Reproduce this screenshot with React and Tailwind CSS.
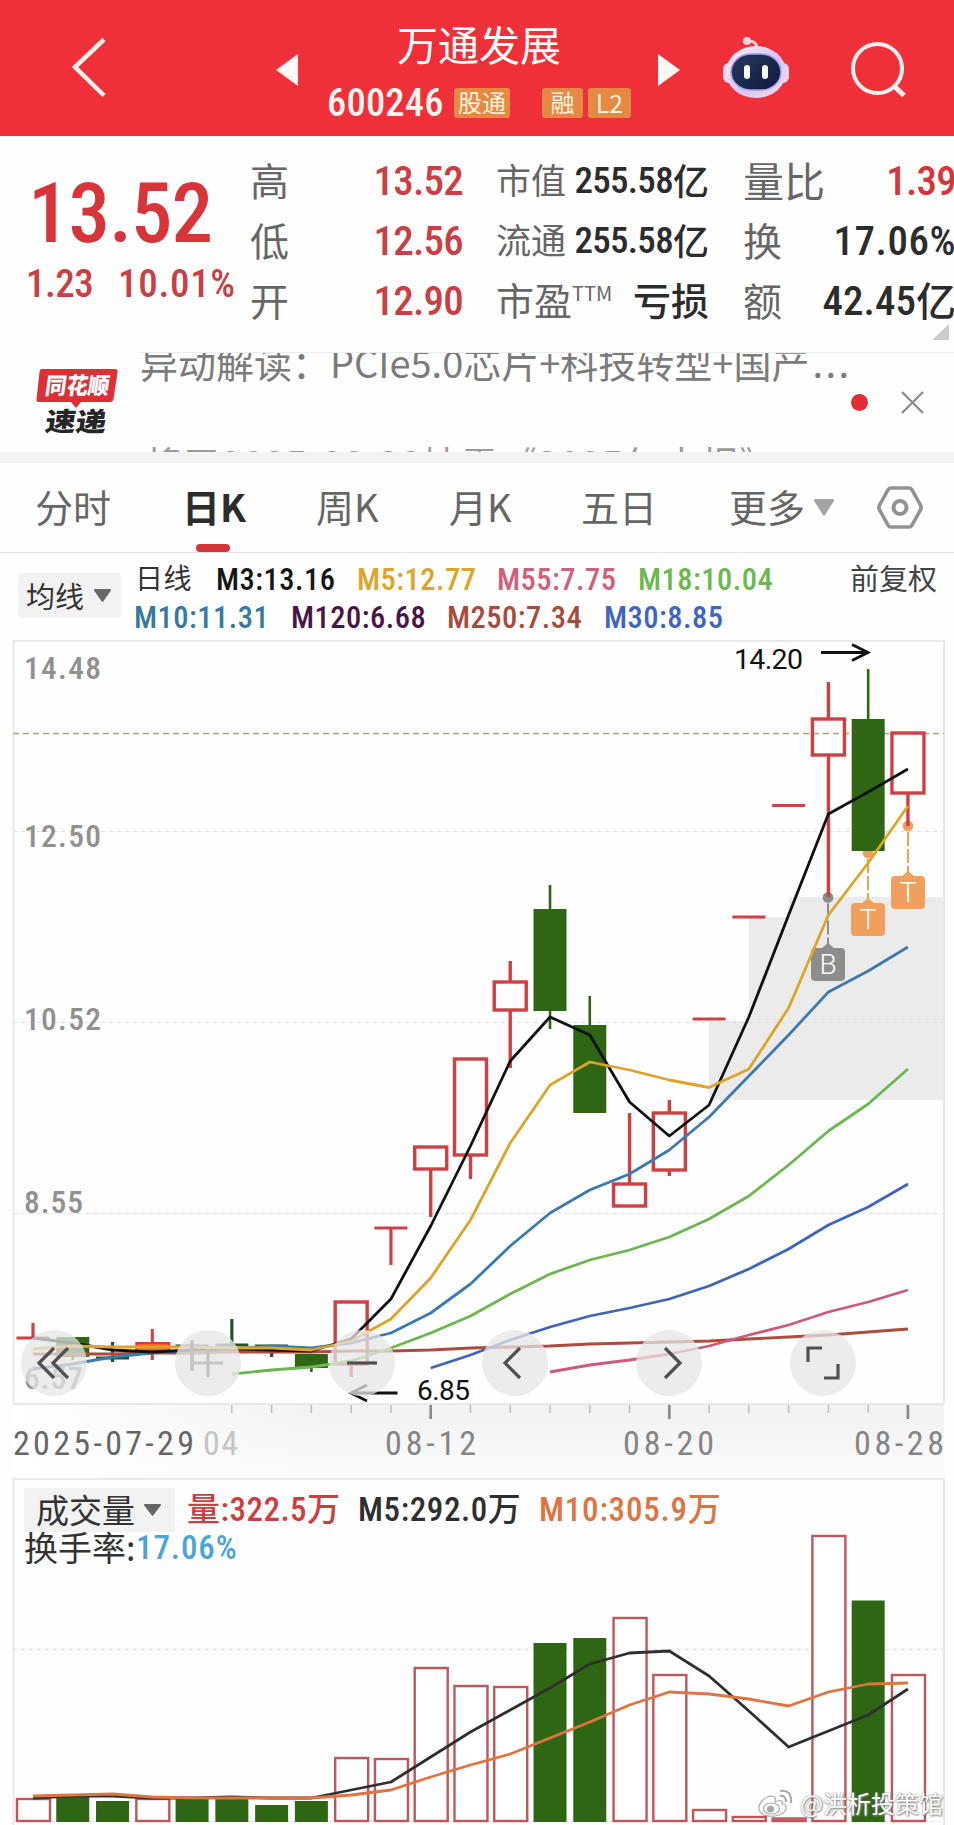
import React from 'react';

const num = "font-['Roboto','Noto_Sans_CJK_SC',sans-serif] [font-stretch:75%] font-medium whitespace-nowrap";
const svgFont = "font-['Roboto','Noto_Sans_CJK_SC',sans-serif]";
const svgNarrow = "font-['Roboto','Noto_Sans_CJK_SC',sans-serif] [font-stretch:75%]";

const RED = '#cf3f43';
const GREEN = '#2f6614';

// x centre of the n-th trading day
const dayX = (i) => 33 + i * 39.77;

// type, body top, body bottom, wick top, wick bottom
const candles = [
  ['dash', 1338, 1338, 1323, 1338],
  ['down', 1337, 1357, 1337, 1360],
  ['downDash', 1358, 1358, 1342, 1362],
  ['hot', 1342, 1351, 1329, 1360],
  ['downDash', 1346, 1346, 1340, 1369],
  ['downDash', 1345, 1345, 1319, 1348],
  ['downDash', 1346, 1346, 1345, 1357],
  ['down', 1354, 1368, 1354, 1372],
  ['up', 1302, 1364, 1302, 1377],
  ['dash', 1228, 1228, 1228, 1265],
  ['up', 1147, 1169, 1147, 1217],
  ['up', 1059, 1155, 1059, 1179],
  ['up', 982, 1010, 961, 1068],
  ['down', 909, 1011, 885, 1029],
  ['down', 1025, 1113, 996, 1113],
  ['up', 1184, 1206, 1113, 1206],
  ['up', 1113, 1170, 1100, 1176],
  ['dash', 1019, 1019, 1019, 1019],
  ['dash', 917, 917, 917, 917],
  ['dash', 805.5, 805.5, 805.5, 805.5],
  ['up', 719, 755, 682, 897],
  ['down', 719, 851, 669, 851],
  ['up', 733, 793, 733, 826],
];

const priceLines = [
  { color: '#b04a3c', from: 0, ys: [1354, 1354, 1354, 1353, 1353, 1352, 1352, 1352, 1351, 1351, 1350, 1348, 1347, 1346, 1344, 1343, 1342, 1341, 1339, 1337, 1335, 1332, 1329] },
  { color: '#cb5b76', from: 13, ys: [1372, 1365, 1360, 1354, 1346, 1335, 1325, 1312, 1302, 1290] },
  { color: '#3d66bb', from: 10, ys: [1368, 1355, 1340, 1327, 1316, 1308, 1299, 1286, 1269, 1249, 1225, 1207, 1184] },
  { color: '#6bb74e', from: 5, ys: [1374, 1370, 1367, 1361, 1348, 1333, 1316, 1294, 1274, 1260, 1250, 1237, 1219, 1196, 1165, 1131, 1104, 1069] },
  { color: '#3a7aae', from: 0, ys: [1369, 1364, 1357, 1353, 1350, 1349, 1346, 1348, 1343, 1333, 1313, 1284, 1246, 1213, 1190, 1174, 1150, 1117, 1076, 1035, 992, 971, 947] },
  { color: '#111111', from: 0, ys: [1338, 1343, 1350, 1352, 1350, 1349, 1350, 1351, 1339, 1299, 1226, 1146, 1061, 1017, 1035, 1102, 1136, 1105, 1017, 915, 814, 792, 769] },
  { color: '#dca528', from: 0, ys: [1349, 1346, 1347, 1347, 1347, 1348, 1348, 1350, 1341, 1319, 1278, 1220, 1143, 1085, 1062, 1070, 1080, 1087.5, 1069, 1008, 915, 863, 806] },
];

const volumes = [
  ['up', 1799], ['down', 1797], ['down', 1801], ['up', 1799], ['down', 1798], ['down', 1798],
  ['down', 1805], ['down', 1801], ['up', 1758], ['up', 1759], ['up', 1668], ['up', 1686],
  ['up', 1687], ['down', 1643], ['down', 1638], ['up', 1618], ['up', 1675], ['up', 1810],
  ['up', 1817], ['up', 1818.5], ['up', 1536], ['down', 1600.5], ['up', 1675],
];

const volumeLines = [
  { color: '#2f2f2f', ys: [1798, 1796, 1796, 1798, 1798, 1797, 1798, 1798, 1790, 1782, 1757, 1732, 1710, 1688, 1664, 1653, 1651, 1676, 1711, 1747, 1731, 1715, 1689] },
  { color: '#e0743f', ys: [1796, 1795, 1794, 1797, 1798, 1798, 1798, 1798, 1795, 1790, 1777, 1765, 1754, 1738, 1722, 1705, 1692, 1694, 1699, 1706, 1692, 1684, 1683] },
];

const toPoints = (ys, from = 0) => ys.map((y, k) => `${dayX(from + k)},${y}`).join(' ');

function Candle({ index, data }) {
  const [type, top, bottom, high, low] = data;
  const x = dayX(index);
  if (type === 'up') {
    return (
      <g stroke={RED} strokeWidth="3.4" fill="none">
        <path d={`M${x} ${high}V${top}M${x} ${bottom}V${low}`} />
        <rect x={x - 16} y={top} width="32" height={bottom - top} />
      </g>
    );
  }
  if (type === 'down') {
    return (
      <g>
        <path d={`M${x} ${high}V${low}`} stroke={GREEN} strokeWidth="2.6" />
        <rect x={x - 16.5} y={top} width="33" height={bottom - top} fill={GREEN} />
      </g>
    );
  }
  if (type === 'hot') {
    return (
      <g>
        <path d={`M${x} ${high}V${low}`} stroke={RED} strokeWidth="3" />
        <rect x={x - 16} y={top + 1} width="33" height={bottom - top - 1} fill="#fb6425" stroke={RED} strokeWidth="2" />
      </g>
    );
  }
  const color = type === 'dash' ? RED : '#24502a';
  return <path d={`M${x - 16.5} ${top}H${x + 16.5}M${x} ${high}V${low}`} stroke={color} strokeWidth="3.2" />;
}

function Marker({ x, dotY, boxY, letter, color }) {
  return (
    <g>
      <circle cx={x} cy={dotY} r="5.4" fill={color} />
      <path d={`M${x} ${dotY + 6}V${boxY - 4}`} stroke={color} strokeWidth="2" strokeDasharray="14 3" />
      <path d={`M${x} ${boxY - 5}l6 5h7q4 0 4 4v25q0 4 -4 4h-26q-4 0 -4 -4v-25q0 -4 4 -4h7z`} fill={color} />
      <text x={x} y={boxY + 26} textAnchor="middle" fontSize="28" fontWeight="300" fill="#fff" className={svgFont}>{letter}</text>
    </g>
  );
}

function Caret({ className, width, height }) {
  return (
    <svg width={width} height={height} viewBox="0 0 20 16" preserveAspectRatio="none" className={className}>
      <path d="M1 0h18q1.500 .5 .7 2L11 15q-1 1.300 -2 0L.3 2Q-.5 .5 1 0z" fill="currentColor" />
    </svg>
  );
}

function Header() {
  return (
    <header className="flex h-[136px] bg-[#f03038] text-white">
      <div className="w-[275px] pt-[36px] pl-[71px]">
        <svg width="36" height="62" viewBox="0 0 36 62" fill="none" stroke="#fff0ec" strokeWidth="4.500">
          <path d="M33 3.500L4 31l29 28.500" />
        </svg>
      </div>
      <div className="w-[24px] pt-[53px]">
        <svg width="24" height="34" viewBox="0 0 24 34" fill="#fff8f4"><path d="M1 17L23 1v32z" /></svg>
      </div>
      <div className="w-[358px]">
        <div className="mt-[15px] h-[66px] pl-[2px] text-center text-[41px] leading-[56px]">万通发展</div>
        <div className="flex h-[44px] items-center pl-[28px]">
          <span className={`${num} w-[127px] text-[38.500px] leading-[40px] tracking-[0.2px] text-[#fff4ee]`}>600246</span>
          <span className="h-[30px] w-[56px] rounded-[3px] bg-[#e58945] text-center text-[24px] leading-[28px] text-[#fff3dc]">股通</span>
          <span className="ml-[32px] h-[30px] w-[41px] rounded-[3px] bg-[#e58945] text-center text-[24px] leading-[28px] text-[#fff3dc]">融</span>
          <span className="ml-[5px] h-[30px] w-[43px] rounded-[3px] bg-[#e58945] text-center text-[25px] leading-[28px] text-[#fff3dc]">L2</span>
        </div>
      </div>
      <div className="w-[64px] pt-[53px]">
        <svg width="24" height="34" viewBox="0 0 24 34" fill="#fff8f4"><path d="M23 17L1 1v32z" /></svg>
      </div>
      <div className="w-[128px] pt-[36px] pl-[1px]">
        <svg width="68" height="64" viewBox="0 0 68 64">
          <defs>
            <linearGradient id="shell" x1="0" y1="0" x2="1" y2="1">
              <stop offset="0" stopColor="#fff1f3" />
              <stop offset=".55" stopColor="#d6c6f6" />
              <stop offset="1" stopColor="#f6dcf1" />
            </linearGradient>
            <linearGradient id="visor" x1="0" y1="0" x2="1" y2="1">
              <stop offset="0" stopColor="#263a60" />
              <stop offset="1" stopColor="#10183c" />
            </linearGradient>
          </defs>
          <path d="M25 5q10-1 10 8" stroke="#f9c9cf" strokeWidth="3" fill="none" />
          <circle cx="25" cy="5" r="4" fill="#fbd5d8" />
          <rect x="1" y="27" width="12" height="20" rx="6" fill="#f3d6ea" />
          <rect x="55" y="27" width="12" height="20" rx="6" fill="#f3cfe2" />
          <ellipse cx="34" cy="36" rx="30" ry="26" fill="url(#shell)" />
          <rect x="9" y="18" width="50" height="36" rx="20" fill="url(#visor)" stroke="#a79df0" strokeWidth="1.500" />
          <rect x="22" y="29" width="6" height="14" rx="3" fill="#fff" />
          <rect x="40" y="29" width="6" height="14" rx="3" fill="#fff" />
        </svg>
      </div>
      <div className="pt-[40px]">
        <svg width="60" height="60" viewBox="0 0 60 60" fill="none" stroke="#fff0ec" strokeWidth="4">
          <circle cx="28.500" cy="28.500" r="24.500" />
          <path d="M44 45l11 10.500" strokeWidth="5" />
        </svg>
      </div>
    </header>
  );
}

function Quote() {
  return (
    <section className="relative flex h-[216px] overflow-hidden text-[#666]">
      <div className="w-[250px] shrink-0 pt-[34px] text-[#d8353a]">
        <div className={`${num} h-[88px] pl-[28px] text-[83px] leading-[88px] tracking-[-1px]`}>13.52</div>
        <div className="flex pl-[26px] pt-[2px] text-[#c93f43]">
          <span className={`${num} w-[92px] text-[39px] leading-[48px] tracking-[-0.5px]`}>1.23</span>
          <span className={`${num} text-[39px] leading-[48px] tracking-[0.7px]`}>10.01%</span>
        </div>
      </div>
      <div className="grid w-[213px] shrink-0 grid-rows-3 pt-[15px] pb-[21px]">
        {[['高', '13.52'], ['低', '12.56'], ['开', '12.90']].map(([label, value]) => (
          <div key={label} className="flex items-center justify-between">
            <span className="pb-[4px] text-[39px] leading-[56px]">{label}</span>
            <span className={`${num} text-[41px] leading-[60px] tracking-[-0.8px] text-[#c93f43]`}>{value}</span>
          </div>
        ))}
      </div>
      <div className="ml-[33px] grid w-[213px] shrink-0 grid-rows-3 pt-[15px] pb-[21px]">
        {[['市值', '255.58'], ['流通', '255.58']].map(([label, value]) => (
          <div key={label} className="flex items-center justify-between whitespace-nowrap">
            <span className="pb-[4px] text-[35px] leading-[56px]">{label}</span>
            <span className="flex items-center text-[#2c2c2c]">
              <span className={`${num} text-[37px] leading-[60px] tracking-[-0.7px]`}>{value}</span>
              <span className="pb-[4px] text-[36px] leading-[56px] font-medium">亿</span>
            </span>
          </div>
        ))}
        <div className="flex items-center justify-between whitespace-nowrap">
          <span className="flex pb-[4px] text-[38px] leading-[56px]">市盈<span className="text-[20px] leading-[44px]">TTM</span></span>
          <span className="pb-[4px] text-[38px] leading-[56px] font-medium text-[#2c2c2c]">亏损</span>
        </div>
      </div>
      <div className="ml-[34px] grid w-[213px] shrink-0 grid-rows-3 pt-[15px] pb-[21px]">
        <div className="flex items-center justify-between">
          <span className="pb-[4px] text-[41px] leading-[56px]">量比</span>
          <span className={`${num} text-[41px] leading-[60px] tracking-[-0.8px] text-[#d8353a]`}>1.39</span>
        </div>
        <div className="flex items-center justify-between">
          <span className="pb-[4px] text-[39px] leading-[56px]">换</span>
          <span className={`${num} text-[41px] leading-[60px] tracking-[0.5px] text-[#2c2c2c]`}>17.06%</span>
        </div>
        <div className="flex items-center justify-between">
          <span className="pb-[4px] text-[39px] leading-[56px]">额</span>
          <span className="flex items-center text-[#2c2c2c]">
            <span className={`${num} text-[41px] leading-[60px]`}>42.45</span>
            <span className="pb-[4px] text-[40px] leading-[56px] font-medium">亿</span>
          </span>
        </div>
      </div>
      <svg className="absolute right-[5px] bottom-[12px]" width="17" height="16" viewBox="0 0 17 16"><path d="M17 0v16H0z" fill="#ccc" /></svg>
    </section>
  );
}

function News() {
  return (
    <section className="flex h-[100px] overflow-hidden">
      <div className="w-[140px] shrink-0 pt-[16px] pl-[35px]">
        <svg width="84" height="72" viewBox="0 0 84 72">
          <path d="M7 1h73q3 0 2.500 3l-4 27q-.5 3-3.500 3H46l-5 6-5-6H4q-3 0-2.500-3l3-27q.3-3 2.500-3z" fill="#dc3036" />
          <g transform="skewX(-8)" className="font-['Noto_Sans_CJK_SC',sans-serif]" fontWeight="900">
            <text x="13" y="26" fontSize="23" fill="#fff" textLength="64" lengthAdjust="spacingAndGlyphs">同花顺</text>
            <text x="18" y="63" fontSize="26" fill="#262626" textLength="61" lengthAdjust="spacingAndGlyphs">速递</text>
          </g>
        </svg>
      </div>
      <div className="w-[710px] shrink-0 overflow-hidden border-t border-[#ececec] whitespace-nowrap text-[#7b7b7b]">
        <div className="-mt-[19px] h-[56px] text-[38px] leading-[56px]">异动解读：PCIe5.0芯片+科技转型+国产<span className="ml-[3px] tracking-[2.500px]">...</span></div>
        <div className="mt-[48px] h-[50px] pl-[4px] text-[38px] leading-[50px] tracking-[0.55px] text-[#9a9a9a]">将于2025-08-28披露《2025年中报》</div>
      </div>
      <div className="flex h-[100px] grow items-center border-t border-[#ececec] pl-[1px]">
        <span className="h-[17px] w-[17px] rounded-full bg-[#e22d30]" />
        <svg className="ml-[33px]" width="23" height="23" viewBox="0 0 23 23" stroke="#8a8a8a" strokeWidth="2.200"><path d="M1 1l21 21M22 1L1 22" /></svg>
      </div>
    </section>
  );
}

function Tabs() {
  return (
    <nav className="flex h-[90px] border-b border-[#e6e6ea] text-[38px] leading-[85px] text-[#666] whitespace-nowrap">
      <span className="w-[182px] pl-[35px]">分时</span>
      <span className="relative w-[134px] font-bold text-[#2c2c2c]">
        日K
        <span className="absolute bottom-0 left-[14px] h-[8px] w-[34px] rounded-full bg-[#d3363b]" />
      </span>
      <span className="w-[133px]">周K</span>
      <span className="w-[132px]">月K</span>
      <span className="w-[148px]">五日</span>
      <span className="flex w-[148px]">
        更多
        <Caret className="mt-[36px] ml-[9px] text-[#a3a3a3]" width="20" height="17" />
      </span>
      <svg className="mt-[22px]" width="46" height="45" viewBox="0 0 46 45" fill="none" stroke="#929292" strokeWidth="3.600">
        <path d="M14 3h18q2 0 3 2l8.500 15q1.200 2.500 0 5L35 40q-1 2-3 2H14q-2 0-3-2L2.500 25q-1.200-2.500 0-5L11 5q1-2 3-2z" />
        <circle cx="23" cy="22.500" r="6.500" strokeWidth="4" />
      </svg>
    </nav>
  );
}

function Averages() {
  return (
    <section className="flex h-[87px]">
      <button className="mt-[20px] ml-[18px] flex h-[45px] w-[103px] items-center rounded-[4px] bg-[#f2f2f2] pl-[8px] text-[29px] leading-[45px] text-[#333]">
        均线
        <Caret className="ml-[10px] text-[#666]" width="17" height="13" />
      </button>
      <div className={`${num} ml-[13px] w-[716px] pt-[8px] text-[30.500px] leading-[38px] tracking-[0.5px]`}>
        <div className="flex">
          <span className="w-[82px] pl-[1px] text-[28px] font-normal text-[#333]">日线</span>
          <span className="w-[141px] text-[#161616]">M3:13.16</span>
          <span className="w-[140px] text-[#dca528]">M5:12.77</span>
          <span className="w-[141px] text-[#cf6079]">M55:7.75</span>
          <span className="text-[#6cb850]">M18:10.04</span>
        </div>
        <div className="flex">
          <span className="w-[157px] text-[#37799f]">M10:11.31</span>
          <span className="w-[156px] text-[#481549]">M120:6.68</span>
          <span className="w-[157px] text-[#a94a3b]">M250:7.34</span>
          <span className="text-[#4065c0]">M30:8.85</span>
        </div>
      </div>
      <span className="pt-[5px] text-[29px] leading-[38px] text-[#444] whitespace-nowrap">前复权</span>
    </section>
  );
}

function RoundButton({ children, muted }) {
  return (
    <button className={`flex h-[66px] w-[66px] items-center justify-center rounded-full ${muted ? 'bg-[#e6e6e6]/80' : 'bg-[#e6e6e6]/75'}`}>
      <svg width="40" height="40" viewBox="0 0 40 40" fill="none" stroke={muted ? '#c4c4c4' : '#505050'} strokeWidth="3.200">
        {children}
      </svg>
    </button>
  );
}

function PriceChart() {
  const scale = [['14.48', 679], ['12.50', 847], ['10.52', 1030], ['8.55', 1213], ['6.57', 1389]];
  return (
    <section className="relative h-[764px]">
      <svg width="954" height="764" viewBox="0 640 954 764" className="block">
        <path d="M709 1021h40V917h40v-20h155v203H709z" fill="#ebebeb" />
        <path d="M13 831.500H944M13 1022.500H944M13 1213.500H944" stroke="#dedede" strokeWidth="1.200" strokeDasharray="4 4" />
        <rect x="13.500" y="641" width="930.500" height="763" fill="none" stroke="#e9e9e9" strokeWidth="2" />
        <path d="M13 733.500H944" stroke="#b39f78" strokeWidth="1.700" strokeDasharray="6 4" />
        {scale.map(([label, y]) => (
          <text key={label} x="24" y={y} fontSize="31.500" fontWeight="500" fill="#909090" textLength={label.length > 4 ? 77 : 59} lengthAdjust="spacing" className={svgNarrow}>{label}</text>
        ))}
        <Marker x={828} dotY={897.5} boxY={948} letter="B" color="#8d8d8d" />
        <Marker x={868} dotY={853} boxY={903} letter="T" color="#f0a05c" />
        <Marker x={908} dotY={826} boxY={876} letter="T" color="#f0a05c" />
        {candles.map((c, i) => <Candle key={i} index={i} data={c} />)}
        {priceLines.map((line) => (
          <polyline key={line.color} points={toPoints(line.ys, line.from)} fill="none" stroke={line.color} strokeWidth="2.800" strokeLinejoin="round" />
        ))}
        <text x="734" y="669" fontSize="28.500" fill="#111" textLength="69" lengthAdjust="spacing" className={svgFont}>14.20</text>
        <path d="M821 652.500H867M852 644.500L868 652.500L852 660.500" fill="none" stroke="#111" strokeWidth="2.800" />
        <text x="417" y="1400" fontSize="28" fill="#111" textLength="53" lengthAdjust="spacing" className={svgFont}>6.85</text>
        <path d="M397.500 1393H352M367 1385L351 1393L367 1401" fill="none" stroke="#111" strokeWidth="2.800" />
      </svg>
      <div className="absolute top-[690px] left-[21px] flex gap-[87.800px]">
        <RoundButton>
          <path d="M20 5L5 20l15 15M34 5L19 20l15 15" />
        </RoundButton>
        <RoundButton muted>
          <path d="M20 6v28M5 20h30M4 -2v30" />
        </RoundButton>
        <RoundButton>
          <path d="M5 20h30" />
        </RoundButton>
        <RoundButton>
          <path d="M25 5L10 20l15 15" />
        </RoundButton>
        <RoundButton>
          <path d="M16 5l15 15l-15 15" />
        </RoundButton>
        <RoundButton>
          <path d="M5 19V5h14M21 35h14V21" />
        </RoundButton>
      </div>
    </section>
  );
}

function DateAxis() {
  const labels = [['2025-07-29', 13, 181, '#666'], ['04', 203, 35, '#c4c4c4'], ['08-12', 385, 91, '#858585'], ['08-20', 623, 91, '#858585'], ['08-28', 854, 90, '#858585']];
  const ticks = Array.from({ length: 18 }, (_, k) => k + 5);
  return (
    <svg width="954" height="74" viewBox="0 1404 954 74" className="block">
      <defs>
        <linearGradient id="axis" x1="0" y1="0" x2="0" y2="1">
          <stop offset="0" stopColor="#f1f1f1" />
          <stop offset="1" stopColor="#fbfbfb" />
        </linearGradient>
        <linearGradient id="axisFade" x1="0" y1="0" x2="1" y2="0">
          <stop offset="0" stopColor="#fff" />
          <stop offset="1" stopColor="#fff" stopOpacity="0" />
        </linearGradient>
      </defs>
      <rect x="13" y="1404" width="931" height="74" fill="url(#axis)" />
      <rect x="13" y="1404" width="320" height="74" fill="url(#axisFade)" />
      <path d="M13 1404.500H944" stroke="#e6e6e6" />
      {ticks.map((i) => {
        const major = i % 6 === 4;
        return <path key={i} d={`M${dayX(i)} 1405V${major ? 1419 : 1413}`} stroke={major ? '#888' : '#bbb'} strokeWidth={major ? 2.6 : 1.4} />;
      })}
      {labels.map(([label, x, width, fill]) => (
        <text key={label} x={x} y="1455" fontSize="34" fontWeight="400" fill={fill} textLength={width} lengthAdjust="spacing" className={svgNarrow}>{label}</text>
      ))}
    </svg>
  );
}

function Watermark() {
  return (
    <div className="absolute right-[11px] bottom-[5px] flex items-center gap-[6px] text-[24px] leading-[34px] text-white whitespace-nowrap [text-shadow:0_0_2px_#777,1px_1px_2px_#888]">
      <svg width="36" height="30" viewBox="0 0 36 30" fill="#fff" stroke="#aaa" strokeWidth="1.200">
        <path d="M13 8C6 9 0 16 1 21c1 6 9 8 16 7s12-5 11-9c0-2-2-3-4-3 1-3-1-5-7-2 1-4 0-6-4-6z" />
        <ellipse cx="13.500" cy="20.500" rx="8" ry="5.500" />
        <circle cx="12.500" cy="21" r="3" fill="#aaa" />
        <path d="M22 8q6-1 6 6M22 3q12-2 11 12" fill="none" strokeWidth="2" />
      </svg>
      <span>@洪析投策馆</span>
    </div>
  );
}

function VolumeChart() {
  return (
    <section className="relative h-[347px]">
      <svg width="954" height="347" viewBox="0 1478 954 347" className="absolute inset-0">
        <path d="M13.500 1825V1479H944V1825" fill="none" stroke="#e9e9e9" strokeWidth="2" />
        <path d="M13 1821.500H944" stroke="#eee" />
        <path d="M13 1649.500H944" stroke="#e2e2e2" strokeWidth="1.500" strokeDasharray="4 4" />
        {volumes.map(([type, top], i) => (
          type === 'up'
            ? <rect key={i} x={dayX(i) - 16} y={top} width="33" height={1821 - top} fill="#fff" stroke="#bd575b" strokeWidth="2.400" />
            : <rect key={i} x={dayX(i) - 16.5} y={top} width="33" height={1822 - top} fill={GREEN} />
        ))}
        {volumeLines.map((line) => (
          <polyline key={line.color} points={toPoints(line.ys)} fill="none" stroke={line.color} strokeWidth="2.800" strokeLinejoin="round" />
        ))}
      </svg>
      <div className="relative pt-[10px] pl-[24px]">
        <div className="flex h-[44px] items-center">
          <button className="flex h-[44px] w-[151px] items-center bg-[#f2f2f2] pl-[12px] text-[33px] text-[#333] whitespace-nowrap">
            成交量
            <Caret className="ml-[9px] text-[#666]" width="17" height="12" />
          </button>
          <span className={`${num} ml-[12px] w-[171px] text-[33px] tracking-[0.5px] text-[#cf3d40]`}>量:322.5万</span>
          <span className={`${num} w-[181px] text-[33px] tracking-[0.6px] text-[#2f2f2f]`}>M5:292.0万</span>
          <span className={`${num} text-[33px] tracking-[0.8px] text-[#dd7442]`}>M10:305.9万</span>
        </div>
        <div className="flex h-[32px] items-center">
          <span className="w-[112px] pb-[3px] text-[34px] leading-[40px] text-[#333] whitespace-nowrap">换手率:</span>
          <span className={`${num} text-[33px] tracking-[0.9px] text-[#4ba4d6]`}>17.06%</span>
        </div>
      </div>
      <Watermark />
    </section>
  );
}

export default function App() {
  return (
    <main className="h-[1825px] w-[954px] overflow-hidden bg-[#fefefe] font-['Noto_Sans_CJK_SC',sans-serif]">
      <Header />
      <Quote />
      <News />
      <div className="h-[11px] bg-[#f3f3f3]" />
      <Tabs />
      <Averages />
      <PriceChart />
      <DateAxis />
      <VolumeChart />
    </main>
  );
}
